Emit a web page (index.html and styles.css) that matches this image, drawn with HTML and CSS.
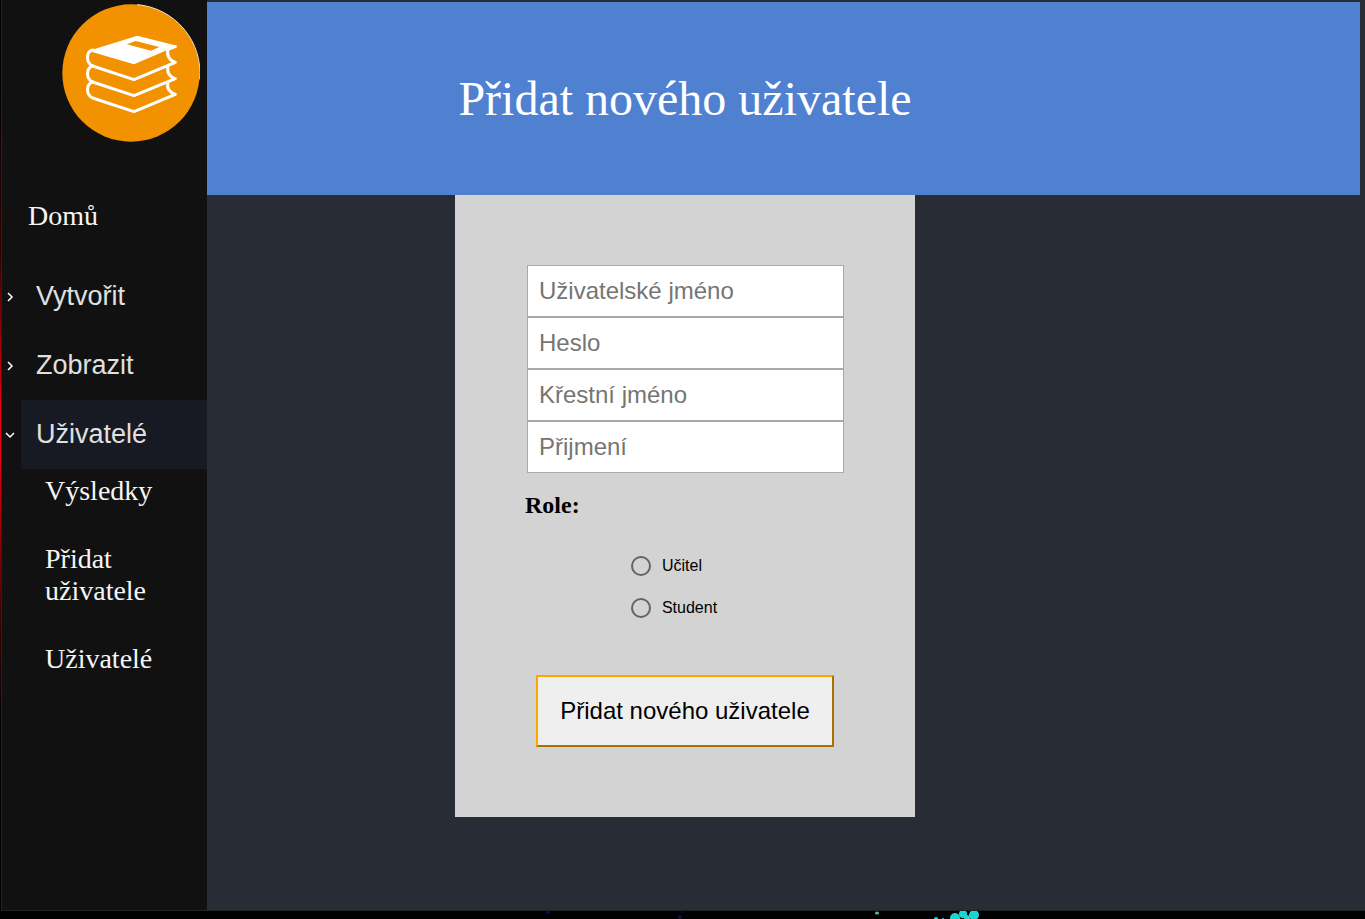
FILE: index.html
```html
<!DOCTYPE html>
<html lang="cs">
<head>
<meta charset="utf-8">
<meta name="viewport" content="width=device-width, initial-scale=1">
<title>Přidat nového uživatele</title>
<link rel="stylesheet" href="styles.css">
</head>
<body>
<div class="window">
  <nav class="sidebar" aria-label="Hlavní navigace">
    <svg class="logo" viewBox="36 12 414 414" aria-hidden="true">
      <circle cx="243" cy="219" r="206" fill="#f39200"/>
      <path d="M262 14A206 206 0 0 1 449 238" fill="none" stroke="#fbe6c8" stroke-width="3"/>
      <path fill="#fff" fill-rule="evenodd" d="M262 107L381 137L352 150L252 193L124 155L124 150ZM257 123L231 133L303 152L328 141Z"/>
      <g fill="none" stroke="#fff" stroke-width="9" stroke-linejoin="round" stroke-linecap="round">
        <path d="M128 150C108 154 107 188 128 198L252 239L376 187C359 182 349 166 354 148L376 140"/>
        <path d="M128 198C108 204 107 236 128 246L252 287L376 236C359 231 349 216 354 198"/>
        <path d="M128 246C108 252 107 284 128 294L252 335L376 283C359 278 349 264 354 247"/>
      </g>
    </svg>
    <a class="link home" href="#domu">Domů</a>
    <ul class="tree">
      <li><button class="node" type="button" aria-expanded="false">
        <svg class="chevron" viewBox="0 0 12 12" aria-hidden="true"><path d="M4 2L8 6L4 10"/></svg><span class="label">Vytvořit</span></button></li>
      <li><button class="node" type="button" aria-expanded="false">
        <svg class="chevron" viewBox="0 0 12 12" aria-hidden="true"><path d="M4 2L8 6L4 10"/></svg><span class="label">Zobrazit</span></button></li>
      <li><button class="node" type="button" aria-expanded="true">
        <svg class="chevron" viewBox="0 0 12 12" aria-hidden="true"><path d="M2 4L6 8L10 4"/></svg><span class="label active">Uživatelé</span></button>
        <ul class="subtree">
          <li><a class="link" href="#vysledky">Výsledky</a></li>
          <li><a class="link" href="#pridat">Přidat uživatele</a></li>
          <li><a class="link" href="#uzivatele">Uživatelé</a></li>
        </ul></li>
    </ul>
  </nav>
  <main class="content">
    <header class="banner"><h1 class="title">Přidat nového uživatele</h1></header>
    <div class="body">
      <form class="card">
        <div class="fields">
          <input class="field" type="text" placeholder="Uživatelské jméno" aria-label="Uživatelské jméno">
          <input class="field" type="password" placeholder="Heslo" aria-label="Heslo">
          <input class="field" type="text" placeholder="Křestní jméno" aria-label="Křestní jméno">
          <input class="field" type="text" placeholder="Přijmení" aria-label="Přijmení">
        </div>
        <h2 class="role" id="role">Role:</h2>
        <div class="options" role="radiogroup" aria-labelledby="role">
          <label class="option"><input class="radio" type="radio" name="role" value="ucitel">Učitel</label>
          <label class="option"><input class="radio" type="radio" name="role" value="student">Student</label>
        </div>
        <button class="submit" type="submit">Přidat nového uživatele</button>
      </form>
    </div>
  </main>
</div>
<footer class="strip">
  <svg class="sparks" viewBox="0 0 460 8" aria-hidden="true">
    <g fill="#0d0d50"><circle cx="8" cy="1" r="2"/><circle cx="140" cy="6" r="2"/><circle cx="142" cy="1" r="1"/></g>
    <ellipse cx="337" cy="2" rx="2" ry="1.500" fill="#5cb8ad"/>
    <g fill="#1bd6d0"><circle cx="415" cy="7" r="5"/><circle cx="423" cy="3" r="4"/><circle cx="434" cy="4" r="5"/><circle cx="427" cy="7" r="3"/><circle cx="396" cy="8" r="2"/><circle cx="403" cy="8" r="1"/></g>
  </svg>
</footer>
</body>
</html>
```
FILE: styles.css
```css
* { box-sizing: border-box; }

body {
  display: flex;
  flex-direction: column;
  min-height: 100vh;
  margin: 0;
  background: #000;
  font-family: "Liberation Serif", "Times New Roman", serif;
}

.window {
  display: flex;
  flex: 1;
  padding-left: 1px;
  background: linear-gradient(#000 8%, #300 28%, #e0000d 44%, #e0000d 51%, #400 67%, #000 80%);
}

.sidebar {
  display: flex;
  flex-direction: column;
  flex: none;
  width: 206px;
  padding-top: 4px;
  border-left: 1px solid #222;
  border-bottom: 1px solid #222;
  background: #111;
}

.logo {
  width: 138px;
  height: 138px;
  margin-left: 60px;
}

.link {
  display: block;
  color: #f5f5f5;
  font-size: 28px;
  line-height: 32px;
  text-decoration: none;
}

.home { margin: 58px 0 30px 26px; }

.tree,
.subtree {
  margin: 0;
  padding: 0;
  list-style: none;
}

.node {
  display: flex;
  align-items: center;
  width: 100%;
  padding: 0;
  border: 0;
  background: none;
  color: #e0e0e0;
  font: 27px/69px "Liberation Sans", Arial, sans-serif;
  text-align: left;
}

.chevron {
  width: 12px;
  height: 12px;
  margin: 0 5px 0 2px;
  fill: none;
  stroke: #fff;
  stroke-width: 1.5;
}

.label {
  flex: 1;
  padding-left: 15px;
}

.active { background: #171923; }

.subtree {
  display: grid;
  gap: 36px;
  padding: 6px 32px 36px 43px;
}

.content {
  flex: 1;
  min-width: 0;
  padding: 2px 5px 0 0;
  border-bottom: 1px solid #222;
  background: #282c34;
}

.banner,
.body {
  display: flex;
  justify-content: center;
  padding-right: 197px;
}

.banner {
  align-items: center;
  min-height: 193px;
  background: #5080d0;
}

.title {
  margin: 0;
  color: #fff;
  font-size: 48px;
  font-weight: 400;
  line-height: 56px;
}

.card {
  display: flex;
  flex-direction: column;
  width: 460px;
  padding: 70px;
  background: #d3d3d3;
}

.fields {
  display: grid;
  padding: 0 1px 0 2px;
}

.field {
  width: 100%;
  height: 52px;
  padding: 0 11px;
  border: 1px solid #a9a9a9;
  border-radius: 0;
  background: #fff;
  font: 24px "Liberation Sans", Arial, sans-serif;
}

.field::placeholder { color: #757575; }

.role {
  margin: 18px 0 26px;
  font-size: 24px;
  line-height: 28px;
}

.options {
  align-self: center;
  margin-bottom: 46px;
  padding-right: 22px;
}

.option {
  display: flex;
  align-items: center;
  gap: 11px;
  height: 42px;
  font: 16px "Liberation Sans", Arial, sans-serif;
}

.radio {
  appearance: none;
  width: 20px;
  height: 20px;
  margin: 0;
  border: 2px solid #646464;
  border-radius: 50%;
}

.radio:checked { background: radial-gradient(#646464 50%, transparent 55%); }

.submit {
  align-self: center;
  width: 298px;
  height: 72px;
  padding: 0;
  border: 2px outset orange;
  background: #efefef;
  color: #000;
  font: 24px "Liberation Sans", Arial, sans-serif;
}

.strip {
  display: flex;
  justify-content: center;
  height: 8px;
  padding-left: 174px;
}

.sparks {
  width: 460px;
  height: 8px;
}
```
